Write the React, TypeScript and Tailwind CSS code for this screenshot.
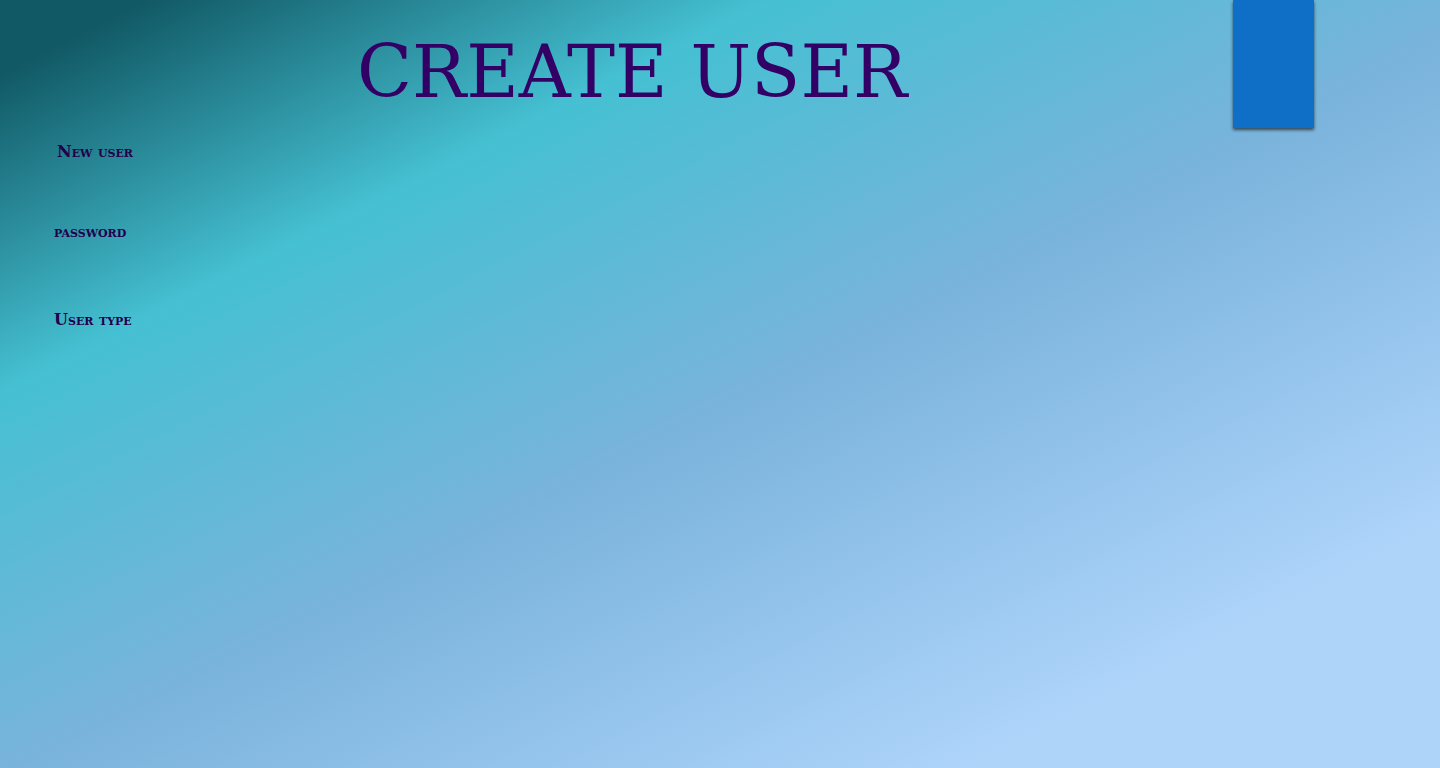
export default function App() {
  return (
    <main className="min-h-screen bg-[linear-gradient(153deg,#115965_0%,#115965_5%,#45c0d2_26%,#7ab3dc_52%,#aed4fa_84%,#aed4fa_100%)] font-['DejaVu_Serif',serif] text-[#330066]">
      <header className="flex h-32 items-start">
        <h1 className="w-[1233px] pl-[357px] pt-8 text-[72px] leading-[80px] whitespace-nowrap">CREATE USER</h1>
        <div className="h-32 w-[81px] shrink-0 bg-[#0f6fc6] shadow-[0_2px_3px_rgba(0,0,0,0.6)]" />
      </header>
      <div className="flex flex-col pl-[54px] text-base leading-4 font-bold text-[#22004d]">
        <p className="mt-4 pl-[3px] [font-variant:small-caps]">New user</p>
        <p className="mt-16 [font-variant:small-caps]">password</p>
        <p className="mt-[72px] [font-variant:small-caps]">User type</p>
      </div>
    </main>
  );
}
